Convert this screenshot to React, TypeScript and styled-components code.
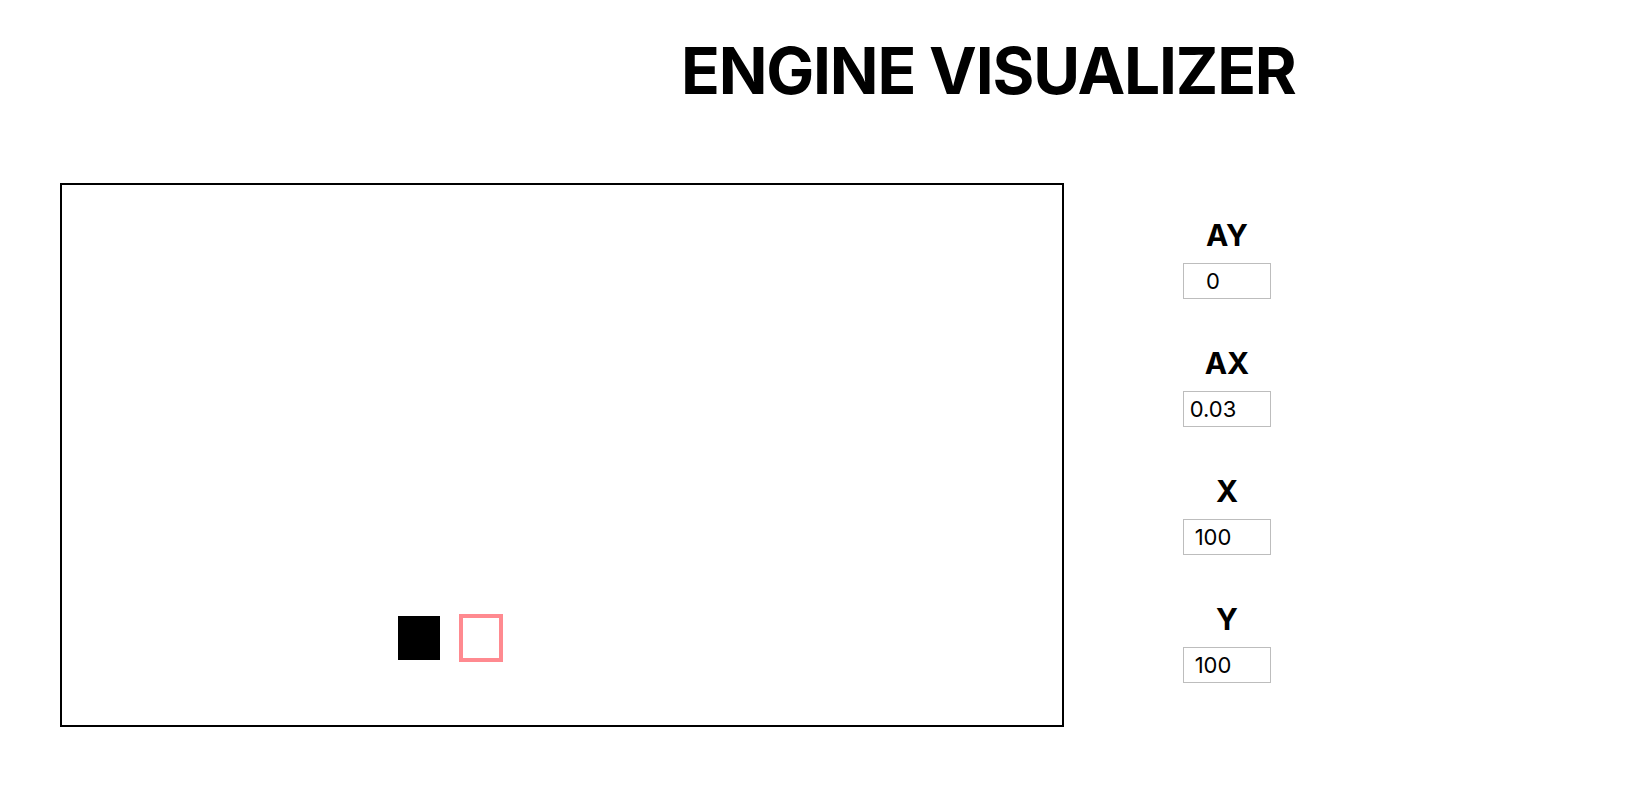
import styled, { createGlobalStyle } from 'styled-components'

const GlobalStyle = createGlobalStyle`
    body {
        margin: 0;
        background: #ffffff;
        font-family: Inter, "Noto Sans", sans-serif;
        color: #000000;
    }
`

const Page = styled.div`
    display: flex;
    flex-direction: column;
    padding-top: 32px;
`

const Title = styled.h1`
    margin: 0 0 0 681px;
    font-size: 64px;
    font-weight: 700;
    letter-spacing: -1.2px;
    line-height: normal;
`

const MainRow = styled.div`
    display: flex;
    flex-direction: row;
    align-items: flex-start;
    gap: 103px;
    margin-top: 74px;
    padding-left: 60px;
`

const Stage = styled.div`
    position: relative;
    width: 1000px;
    height: 540px;
    border: 2px solid #000000;
    overflow: hidden;
    flex-shrink: 0;
`

const Body = styled.div<{ $solid?: boolean }>`
    position: absolute;
    box-sizing: border-box;
    background: ${p => p.$solid ? '#000000' : 'transparent'};
    border: ${p => p.$solid ? 'none' : '4px solid #ff8a90'};
    filter: blur(${p => p.$solid ? '0.6px' : '0.4px'});
`

const Controls = styled.div`
    display: flex;
    flex-direction: column;
    align-items: center;
    gap: 46px;
    width: 120px;
    padding-top: 34px;
`

const Field = styled.div`
    display: flex;
    flex-direction: column;
    align-items: center;
    gap: 10px;
`

const Label = styled.label`
    font-size: 30px;
    font-weight: 700;
    line-height: 36px;
`

const Input = styled.input`
    box-sizing: border-box;
    width: 88px;
    height: 36px;
    border: 1px solid #bdbdbd;
    border-radius: 0;
    padding: 0 30px 0 2px;
    font-family: Inter, "Noto Sans", sans-serif;
    font-size: 22px;
    color: #000000;
    text-align: center;
    outline: none;
`

const fields = [
    { name: 'AY', value: '0' },
    { name: 'AX', value: '0.03' },
    { name: 'X', value: '100' },
    { name: 'Y', value: '100' },
]

export default function App() {
    return (
        <Page>
            <GlobalStyle />
            <Title>ENGINE VISUALIZER</Title>
            <MainRow>
                <Stage>
                    <Body $solid style={{ left: 336, top: 431, width: 42, height: 44 }} />
                    <Body style={{ left: 397, top: 429, width: 44, height: 48 }} />
                </Stage>
                <Controls>
                    {fields.map(f => (
                        <Field key={f.name}>
                            <Label>{f.name}</Label>
                            <Input type="text" defaultValue={f.value} />
                        </Field>
                    ))}
                </Controls>
            </MainRow>
        </Page>
    )
}
